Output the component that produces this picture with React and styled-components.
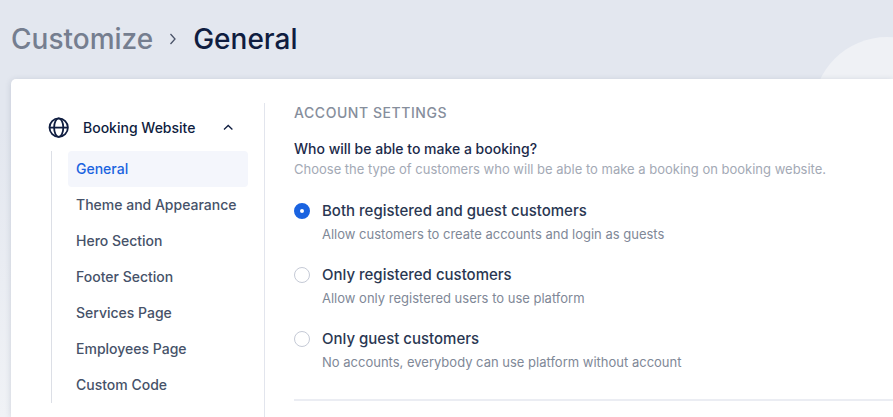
import { useState } from 'react';
import styled, { createGlobalStyle } from 'styled-components';

const GlobalStyle = createGlobalStyle`
  * {
    box-sizing: border-box;
  }

  body {
    margin: 0;
    background-color: #e3e7ef;
    color: #1b2a4a;
    font-family: Inter, 'Liberation Sans', sans-serif;
    font-size: 14px;
    line-height: 20px;
  }
`;

const Page = styled.div`
  position: relative;
  display: flex;
  flex-direction: column;
  gap: 20px;
  min-height: 100vh;
  padding: 19px 0 0 11px;
  overflow: hidden;
  background: linear-gradient(#e3e7ef 30%, #f0f2f6);
`;

const BackgroundCircle = styled.div`
  position: absolute;
  top: 37px;
  right: -68px;
  width: 148px;
  height: 148px;
  border-radius: 50%;
  background-color: #eff1f5;
`;

const Breadcrumb = styled.nav`
  position: relative;
  display: flex;
  align-items: center;
  gap: 14px;
  color: #4a5368;
  font-size: 28px;
  font-weight: 500;
  line-height: 40px;
`;

const BreadcrumbLink = styled.a`
  color: #757e8f;
  text-decoration: none;
`;

const PageTitle = styled.h1`
  margin: 0;
  color: #0f1d40;
  font-size: inherit;
  font-weight: inherit;
`;

const Card = styled.div`
  position: relative;
  display: flex;
  flex: 1;
  padding: 24px 0 0 36px;
  border-top-left-radius: 5px;
  background-color: #fff;
  box-shadow: 0 1px 6px rgba(40, 55, 90, 0.16);
`;

const Sidebar = styled.aside`
  width: 218px;
  flex-shrink: 0;
  padding-right: 16px;
  border-right: 1px solid #e2e5ed;
`;

const GroupButton = styled.button`
  display: flex;
  align-items: center;
  gap: 12px;
  width: 100%;
  height: 48px;
  padding: 2px 14px 0 0;
  border: 0;
  background: none;
  color: #0f1d40;
  font: inherit;
  font-weight: 500;
  text-align: left;
  cursor: pointer;

  span {
    flex: 1;
  }
`;

const SubMenu = styled.ul`
  margin: 0 0 0 4px;
  padding: 0 0 0 16px;
  border-left: 1px solid #dcdfe6;
  list-style: none;
`;

const SubMenuLink = styled.a`
  display: block;
  padding: 8px;
  border-radius: 4px;
  background-color: ${({ $active }) => ($active ? '#f4f6fc' : 'transparent')};
  color: ${({ $active }) => ($active ? '#1a63e0' : '#465269')};
  font-weight: 500;
  text-decoration: none;
`;

const Content = styled.main`
  flex: 1;
  min-width: 0;
  padding-left: 29px;
`;

const SectionTitle = styled.h2`
  margin: 0 0 16px;
  color: #868e9c;
  font-size: 14px;
  font-weight: 500;
  letter-spacing: 0.04em;
  text-transform: uppercase;
`;

const Fieldset = styled.fieldset`
  min-width: 0;
  margin: 0;
  padding: 0 0 27px;
  border: 0;
  border-bottom: 2px solid #ebedf3;
`;

const Legend = styled.legend`
  padding: 0;
  color: #1b2a4a;
  font-weight: 500;
`;

const Description = styled.p`
  margin: 0;
  color: ${({ $light }) => ($light ? '#a3a9b5' : '#808897')};
  font-size: 13px;
`;

const Options = styled.div`
  display: flex;
  flex-direction: column;
  gap: 20px;
  margin-top: 21px;
`;

const Option = styled.div`
  display: grid;
  grid-template-columns: 16px 1fr;
  align-items: center;
  column-gap: 12px;
  row-gap: 2px;

  p {
    grid-column: 2;
  }
`;

const OptionLabel = styled.label`
  color: #2a3752;
  font-size: 15px;
  font-weight: 500;
  line-height: 22px;
`;

const Radio = styled.input`
  appearance: none;
  width: 16px;
  height: 16px;
  margin: 0;
  border: 1px solid #c5cad6;
  border-radius: 50%;
  background-color: #fff;

  &:checked {
    border: 6px solid #1a63e0;
  }
`;

const pages = [
  'General',
  'Theme and Appearance',
  'Hero Section',
  'Footer Section',
  'Services Page',
  'Employees Page',
  'Custom Code',
];

const accountOptions = [
  {
    id: 'both',
    label: 'Both registered and guest customers',
    description: 'Allow customers to create accounts and login as guests',
  },
  {
    id: 'registered',
    label: 'Only registered customers',
    description: 'Allow only registered users to use platform',
  },
  {
    id: 'guest',
    label: 'Only guest customers',
    description: 'No accounts, everybody can use platform without account',
  },
];

function GlobeIcon() {
  return (
    <svg
      width="24"
      height="24"
      viewBox="0 0 24 24"
      fill="none"
      stroke="currentColor"
      strokeWidth="1.8"
      aria-hidden="true"
    >
      <circle cx="11.7" cy="11.6" r="9.2" />
      <ellipse cx="11.7" cy="11.6" rx="4.6" ry="9.2" />
      <path d="M2.5 11.6h18.4" />
    </svg>
  );
}

function ChevronIcon({ direction }) {
  const paths = {
    up: 'M2 7.5l4.2-4 4.2 4',
    down: 'M2 4l4.2 4 4.2-4',
    right: 'M3.5 1l4.5 5-4.5 5',
  };

  return (
    <svg
      width="12"
      height="12"
      viewBox="0 0 12 12"
      fill="none"
      stroke="currentColor"
      strokeWidth="1.3"
      aria-hidden="true"
    >
      <path d={paths[direction]} />
    </svg>
  );
}

export default function App() {
  const [isOpen, setIsOpen] = useState(true);
  const [activePage, setActivePage] = useState('General');
  const [access, setAccess] = useState('both');

  return (
    <>
      <GlobalStyle />
      <Page>
        <BackgroundCircle />
        <Breadcrumb aria-label="Breadcrumb">
          <BreadcrumbLink href="#customize">Customize</BreadcrumbLink>
          <ChevronIcon direction="right" />
          <PageTitle>General</PageTitle>
        </Breadcrumb>
        <Card>
          <Sidebar>
            <GroupButton
              type="button"
              aria-expanded={isOpen}
              onClick={() => setIsOpen(!isOpen)}
            >
              <GlobeIcon />
              <span>Booking Website</span>
              <ChevronIcon direction={isOpen ? 'up' : 'down'} />
            </GroupButton>
            {isOpen && (
              <SubMenu>
                {pages.map((page) => (
                  <li key={page}>
                    <SubMenuLink
                      href="#page"
                      $active={page === activePage}
                      onClick={() => setActivePage(page)}
                    >
                      {page}
                    </SubMenuLink>
                  </li>
                ))}
              </SubMenu>
            )}
          </Sidebar>
          <Content>
            <SectionTitle>Account settings</SectionTitle>
            <Fieldset>
              <Legend>Who will be able to make a booking?</Legend>
              <Description $light>
                Choose the type of customers who will be able to make a booking
                on booking website.
              </Description>
              <Options>
                {accountOptions.map(({ id, label, description }) => (
                  <Option key={id}>
                    <Radio
                      type="radio"
                      name="access"
                      id={id}
                      checked={access === id}
                      onChange={() => setAccess(id)}
                    />
                    <OptionLabel htmlFor={id}>{label}</OptionLabel>
                    <Description>{description}</Description>
                  </Option>
                ))}
              </Options>
            </Fieldset>
          </Content>
        </Card>
      </Page>
    </>
  );
}
